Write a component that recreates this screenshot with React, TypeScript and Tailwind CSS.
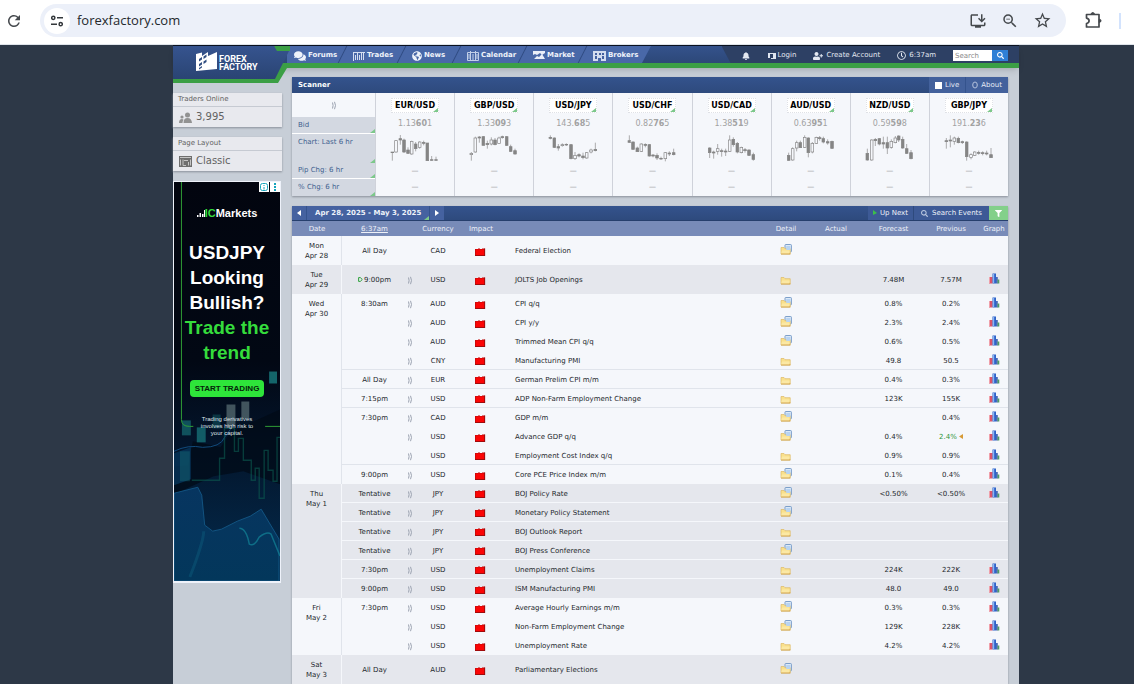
import { Fragment } from "react";
import type { ReactNode } from "react";
import { FaBell, FaComments, FaFilter, FaGlobeAmericas, FaRegClock, FaSearch, FaUserPlus } from "react-icons/fa";
import { MdInstallDesktop, MdOutlineExtension, MdRefresh, MdStarOutline, MdZoomOut } from "react-icons/md";

// x, high, low, open/close top, open/close bottom, filled
type Candle = [number, number, number, number, number, boolean];

type Pair = { name: string; price: [string, string, string]; candles: Candle[] };

const pairs: Pair[] = [
  {
    name: "EUR/USD",
    price: ["1.13", "60", "1"],
    candles: [
      [7, 54, 80, 54, 56, true], [18, 18, 56, 20, 54, false], [31, 3, 32, 14, 18, true], [42, 14, 57, 18, 54, true],
      [54, 40, 60, 48, 58, true], [65, 20, 62, 22, 60, false], [77, 24, 52, 30, 44, true], [89, 22, 44, 24, 40, false],
      [101, 20, 34, 25, 28, true], [112, 27, 80, 27, 80, true], [125, 66, 80, 77, 79, true], [138, 68, 80, 77, 79, true],
    ],
  },
  {
    name: "GBP/USD",
    price: ["1.33", "09", "3"],
    candles: [
      [7, 54, 80, 58, 62, false], [19, 8, 56, 12, 54, false], [31, 6, 26, 9, 12, true], [43, 6, 34, 8, 34, true],
      [55, 20, 44, 28, 32, true], [67, 10, 34, 18, 30, false], [78, 12, 34, 18, 32, true], [90, 8, 28, 12, 28, false],
      [100, 5, 14, 8, 11, true], [113, 6, 36, 8, 34, true], [125, 32, 54, 38, 52, true], [138, 44, 62, 50, 60, true],
    ],
  },
  {
    name: "USD/JPY",
    price: ["143.", "68", "5"],
    candles: [
      [7, 4, 16, 10, 13, true], [19, 10, 42, 12, 40, true], [31, 30, 50, 38, 42, true], [43, 28, 38, 32, 35, false],
      [55, 28, 36, 31, 33, true], [69, 30, 76, 32, 74, true], [81, 54, 78, 64, 74, false], [93, 58, 70, 62, 66, true],
      [105, 56, 76, 66, 71, true], [116, 54, 74, 56, 72, false], [129, 44, 58, 48, 54, false], [142, 26, 52, 46, 50, true],
    ],
  },
  {
    name: "USD/CHF",
    price: ["0.82", "76", "5"],
    candles: [
      [7, 4, 26, 20, 25, true], [18, 22, 46, 24, 46, true], [31, 38, 54, 42, 53, true], [43, 28, 54, 30, 52, false],
      [55, 28, 40, 31, 34, true], [67, 30, 68, 32, 66, true], [78, 60, 70, 63, 66, true], [90, 58, 78, 64, 72, true],
      [102, 68, 78, 73, 75, true], [115, 54, 82, 56, 74, false], [127, 52, 66, 57, 60, true], [140, 44, 64, 56, 62, true],
    ],
  },
  {
    name: "USD/CAD",
    price: ["1.38", "51", "9"],
    candles: [
      [8, 40, 72, 42, 56, true], [20, 50, 74, 54, 57, true], [32, 30, 62, 44, 52, false], [44, 44, 68, 50, 53, true],
      [56, 44, 66, 51, 54, true], [68, 4, 54, 18, 52, false], [79, 10, 38, 16, 32, true], [91, 24, 58, 28, 54, true],
      [103, 38, 58, 40, 56, false], [114, 42, 56, 47, 50, true], [126, 46, 66, 48, 64, true], [139, 56, 80, 62, 76, true],
    ],
  },
  {
    name: "AUD/USD",
    price: ["0.63", "95", "1"],
    candles: [
      [8, 56, 80, 64, 79, true], [20, 40, 80, 44, 78, false], [32, 20, 52, 26, 42, false], [43, 20, 42, 26, 41, true],
      [56, 4, 42, 10, 40, false], [67, 10, 70, 12, 56, true], [79, 24, 58, 28, 54, false], [91, 8, 30, 10, 28, false],
      [101, 6, 20, 11, 14, true], [112, 8, 28, 14, 24, true], [125, 16, 32, 23, 27, true], [138, 20, 44, 22, 43, true],
    ],
  },
  {
    name: "NZD/USD",
    price: ["0.59", "59", "8"],
    candles: [
      [7, 44, 80, 58, 78, true], [20, 16, 80, 18, 78, false], [31, 12, 36, 16, 20, true], [43, 12, 34, 14, 30, true],
      [55, 8, 44, 26, 30, true], [67, 8, 60, 26, 42, true], [79, 16, 44, 22, 40, false], [91, 6, 28, 12, 26, false],
      [101, 4, 24, 6, 18, true], [113, 8, 44, 16, 42, true], [125, 30, 60, 44, 58, true], [138, 48, 76, 56, 74, true],
    ],
  },
  {
    name: "GBP/JPY",
    price: ["191.", "23", "6"],
    candles: [
      [7, 12, 44, 20, 23, true], [19, 4, 40, 18, 21, true], [31, 8, 32, 12, 22, false], [43, 8, 28, 13, 26, true],
      [55, 20, 30, 23, 26, true], [68, 22, 80, 24, 68, true], [81, 58, 76, 62, 70, false], [92, 52, 66, 54, 64, false],
      [104, 50, 62, 55, 58, true], [116, 52, 64, 56, 59, true], [128, 50, 64, 57, 60, true], [141, 42, 72, 62, 71, true],
    ],
  },
];

type Row = {
  time?: string;
  next?: boolean;
  silent?: boolean;
  cur: string;
  event: string;
  doc?: boolean;
  forecast?: string;
  previous?: string;
  revised?: boolean;
  line?: boolean;
};

type Day = { day: string; date: string; rows: Row[] };

const days: Day[] = [
  {
    day: "Mon",
    date: "Apr 28",
    rows: [{ time: "All Day", silent: true, cur: "CAD", event: "Federal Election", doc: true }],
  },
  {
    day: "Tue",
    date: "Apr 29",
    rows: [{ time: "9:00pm", next: true, cur: "USD", event: "JOLTS Job Openings", forecast: "7.48M", previous: "7.57M" }],
  },
  {
    day: "Wed",
    date: "Apr 30",
    rows: [
      { time: "8:30am", cur: "AUD", event: "CPI q/q", doc: true, forecast: "0.8%", previous: "0.2%" },
      { cur: "AUD", event: "CPI y/y", doc: true, forecast: "2.3%", previous: "2.4%" },
      { cur: "AUD", event: "Trimmed Mean CPI q/q", doc: true, forecast: "0.6%", previous: "0.5%" },
      { cur: "CNY", event: "Manufacturing PMI", forecast: "49.8", previous: "50.5", line: true },
      { time: "All Day", cur: "EUR", event: "German Prelim CPI m/m", forecast: "0.4%", previous: "0.3%", line: true },
      { time: "7:15pm", cur: "USD", event: "ADP Non-Farm Employment Change", forecast: "123K", previous: "155K", line: true },
      { time: "7:30pm", cur: "CAD", event: "GDP m/m", doc: true, forecast: "", previous: "0.4%" },
      { cur: "USD", event: "Advance GDP q/q", doc: true, forecast: "0.4%", previous: "2.4%", revised: true },
      { cur: "USD", event: "Employment Cost Index q/q", forecast: "0.9%", previous: "0.9%", line: true },
      { time: "9:00pm", cur: "USD", event: "Core PCE Price Index m/m", doc: true, forecast: "0.1%", previous: "0.4%" },
    ],
  },
  {
    day: "Thu",
    date: "May 1",
    rows: [
      { time: "Tentative", cur: "JPY", event: "BOJ Policy Rate", doc: true, forecast: "<0.50%", previous: "<0.50%", line: true },
      { time: "Tentative", cur: "JPY", event: "Monetary Policy Statement", doc: true, line: true },
      { time: "Tentative", cur: "JPY", event: "BOJ Outlook Report", line: true },
      { time: "Tentative", cur: "JPY", event: "BOJ Press Conference", doc: true, line: true },
      { time: "7:30pm", cur: "USD", event: "Unemployment Claims", forecast: "224K", previous: "222K", line: true },
      { time: "9:00pm", cur: "USD", event: "ISM Manufacturing PMI", forecast: "48.0", previous: "49.0" },
    ],
  },
  {
    day: "Fri",
    date: "May 2",
    rows: [
      { time: "7:30pm", cur: "USD", event: "Average Hourly Earnings m/m", doc: true, forecast: "0.3%", previous: "0.3%" },
      { cur: "USD", event: "Non-Farm Employment Change", doc: true, forecast: "129K", previous: "228K" },
      { cur: "USD", event: "Unemployment Rate", forecast: "4.2%", previous: "4.2%" },
    ],
  },
  {
    day: "Sat",
    date: "May 3",
    rows: [{ time: "All Day", silent: true, cur: "AUD", event: "Parliamentary Elections", doc: true }],
  },
];

function TradesIcon() {
  return (
    <svg width="12" height="10" viewBox="0 0 12 10" fill="none" stroke="#d5def0">
      <path d="M0 1.5h12M.5 1v9M2.5 4v5M4.5 2v7M6.5 4v5M8.5 2v7M10.5 1v8" />
    </svg>
  );
}

function CalendarIcon() {
  return (
    <svg width="12" height="10" viewBox="0 0 12 10" fill="none" stroke="#c3d0e8">
      <path d="M.5 1.5h11v8H.5zM3.5 0v9M6 3v6M8.5 0v9M2 3v5M10 3v5" />
    </svg>
  );
}

function MarketIcon() {
  return (
    <svg width="12" height="9" viewBox="0 0 12 9">
      <path d="M0 0h12v2L9 4 7 2 4 4 2 3 0 4z" fill="#e9eef8" />
      <path d="M1 8l3-3 2 1 3-3 3 5H1z" fill="#e9eef8" />
    </svg>
  );
}

function BrokersIcon() {
  return (
    <svg width="13" height="10" viewBox="0 0 13 10">
      <path d="M0 0h13v10H8V7H5v3H0z" fill="#d3dcee" />
      <path d="M2 2h2v2H2zM2 5h2v3H2zM6 2h2v2H6zM9 2h2v2H9zM9 5h2v3H9z" fill="#4360a0" />
    </svg>
  );
}

const navItems: { label: string; icon: ReactNode; width: string }[] = [
  { label: "Forums", icon: <FaComments size={12} />, width: "w-[59px]" },
  { label: "Trades", icon: <TradesIcon />, width: "w-[59px]" },
  { label: "News", icon: <FaGlobeAmericas size={10} />, width: "w-[55px]" },
  { label: "Calendar", icon: <CalendarIcon />, width: "w-[66px]" },
  { label: "Market", icon: <MarketIcon />, width: "w-[60px]" },
  { label: "Brokers", icon: <BrokersIcon />, width: "w-[65px]" },
];

function SoundIcon() {
  return (
    <svg className="mx-auto" width="6" height="9" viewBox="0 0 6 9" fill="none" stroke="#9ba2b0">
      <path d="M1.500 1.500q1.200 3 0 6M3.500.8q2 3.700 0 7.400" />
    </svg>
  );
}

function ImpactIcon() {
  return (
    <svg className="mx-auto" width="12" height="8" viewBox="0 0 12 8">
      <path d="M0 1h3V.4h2V1h2V.4h3V8H0z" fill="#c40a0a" />
      <path d="M.8 1.500h8.400v5.500H.8z" fill="#fb0505" />
      <path d="M0 7.600h10M9.700.4V8" fill="none" stroke="#8d0d0d" strokeWidth=".7" />
    </svg>
  );
}

function FolderIcon({ doc }: { doc?: boolean }) {
  return (
    <svg className={doc ? "mx-auto mb-1" : "mx-auto mb-0.5"} width="12" height="11" viewBox="0 0 12 11">
      {doc && <rect x="5" y=".5" width="6.400" height="7.500" rx=".8" fill="#dbe9f8" stroke="#7196c4" strokeWidth=".9" />}
      <path d="M1 3.500h3l1 1.200h5.200V10H1z" fill="#f9e08c" stroke="#dcb967" strokeWidth=".7" />
      <path d="M2 6.500h7.800L9 10H1z" fill="#fbe8a4" />
      {doc && <path d="M6.200 2v4h4V2z" fill="#b7d3f2" />}
      <path d="M1 10h9.400" stroke="#cf9f45" strokeWidth=".9" />
    </svg>
  );
}

function GraphIcon() {
  return (
    <svg className="mx-auto mb-1" width="11" height="11" viewBox="0 0 11 11">
      <path d="M0 4h3.500v6.500H0z" fill="#d9546a" />
      <path d="M0 4h1v6.500H0z" fill="#f0a0aa" />
      <path d="M3.500.5H7v10H3.500z" fill="#2d62c9" />
      <path d="M4 1h1.200v9H4z" fill="#8db4f2" />
      <path d="M7 4h1.800v6.500H7z" fill="#4a6ab8" />
      <path d="M8.500 6.500h1.800v4H8.500z" fill="#4f9b66" />
    </svg>
  );
}

function CandleChart({ candles }: { candles: Candle[] }) {
  return (
    <svg className="mx-auto" width="50" height="28" viewBox="0 0 150 84">
      {candles.map(([x, high, low, top, bottom, filled]) => (
        <g key={x} stroke="#858585" strokeWidth="2">
          <path d={`M${x} ${high}V${low}`} />
          <rect x={x - 4} y={top} width="8" height={bottom - top} fill={filled ? "#858585" : "#f5f7fb"} />
        </g>
      ))}
    </svg>
  );
}

function Corner() {
  return (
    <svg className="absolute right-0 bottom-0" width="5" height="4" viewBox="0 0 5 4">
      <path d="M5 0v4H0z" fill="#7cc88a" />
    </svg>
  );
}

function BrowserBar() {
  return (
    <div className="flex h-[45px] items-start border-b border-[#dfe4ea] bg-white text-[#45494d]">
      <button aria-label="Reload" className="mt-3 ml-[5px] w-[18px]">
        <MdRefresh size={18} />
      </button>
      <div className="mt-1 ml-[17px] flex h-[33px] flex-1 items-center rounded-full bg-[#ecf0f9] pr-[14px] pl-1">
        <button aria-label="Site information" className="flex size-[26px] items-center justify-center rounded-full bg-white">
          <svg width="12" height="12" viewBox="0 0 12 12" fill="none" stroke="#33373b" strokeWidth="1.5">
            <circle cx="2.3" cy="2.8" r="1.6" />
            <circle cx="9.7" cy="9.2" r="1.6" />
            <path d="M6 2.8h6M0 9.2h6" />
          </svg>
        </button>
        <input
          aria-label="Address"
          defaultValue="forexfactory.com"
          className="ml-[7px] min-w-0 flex-1 bg-transparent font-['Open_Sans',sans-serif] text-[13px] text-[#24282c] outline-none"
        />
        <button aria-label="Install">
          <MdInstallDesktop size={18} />
        </button>
        <button aria-label="Zoom" className="ml-[14px]">
          <MdZoomOut size={18} />
        </button>
        <button aria-label="Bookmark" className="ml-[14px]">
          <MdStarOutline size={19} />
        </button>
      </div>
      <button aria-label="Extensions" className="mt-[11px] ml-[18px]">
        <svg width="19" height="19" viewBox="0 0 19 19" fill="none" stroke="currentColor" strokeWidth="1.700" strokeLinejoin="round">
          <path d="M2.500 3.500h12.500v12.500H2.500v-3.500q2.600-.5 2.600-2.700t-2.600-2.700z" />
          <path d="M7.500 3q1.300-2.400 2.600 0zM15.500 8.500q2.400 1.300 0 2.600z" fill="currentColor" />
        </svg>
      </button>
      <div className="mt-[13px] mr-[13px] ml-[16px] h-4 w-0.5 bg-[#d3e3fd]" />
    </div>
  );
}

function Logo() {
  return (
    <a href="#home" aria-label="Forex Factory" className="absolute top-0 left-0 block h-[40px] w-[122px]">
      <svg className="absolute inset-0" width="122" height="40" viewBox="0 0 122 40">
        <defs>
          <linearGradient id="logo" x1="0" y1="0" x2="0" y2="1">
            <stop offset="0" stopColor="#36548f" />
            <stop offset="1" stopColor="#2a4473" />
          </linearGradient>
        </defs>
        <path d="M0 33h101l8-16h13v5h-8l-9 15H0z" fill="#3b9f45" />
        <path d="M101 0h16v5h-14z" fill="#3b9f45" />
        <path d="M0 0h101l3 5h12l-14 28H0z" fill="url(#logo)" />
        <path d="M23 25V8l6-1.500v3.500l6-4v4l9-4v17z" fill="#fff" />
        <path d="M26 13l3-2v2.500l-3 2zM30.500 10.500l3-2V11l-3 2zM26 18l3-2v2.500l-3 2zM30.500 15.500l3-2V16l-3 2zM26 22l3-2v1.500l-3 2z" fill="#2f4c80" />
      </svg>
      <span className="absolute top-[9px] left-[46px] font-['Roboto',sans-serif] text-[9px] leading-[8px] font-bold text-white">
        FOREX
        <br />
        FACTORY
      </span>
    </a>
  );
}

function Header() {
  return (
    <header className="relative z-10 flex h-[22px] justify-between border-b-[5px] border-[#3b9f45] bg-linear-to-b from-[#34528c] to-[#2d4878] shadow-md">
      <nav className="ml-[114px] flex bg-[#4968a8] [clip-path:polygon(0_0,100%_0,calc(100%-9px)_100%,0_100%)]">
        {navItems.map((item) => (
          <a key={item.label} href="#nav" className={`relative flex items-center gap-0.5 pt-0.5 pl-[7px] text-[7px] font-bold text-[#eef2fa] ${item.width}`}>
            {item.icon}
            {item.label}
            <span className="absolute inset-y-0 right-[3px] w-px -skew-x-[27deg] bg-[#2f4a80]" />
          </a>
        ))}
      </nav>
      <div className="flex items-center bg-[#2d4064] pt-0.5 pr-[11px] pl-5 text-[7px] text-[#e3e8f1] [clip-path:polygon(0_0,100%_0,100%_100%,9px_100%)]">
        <FaBell size={8} />
        <a href="#login" className="ml-[18px] flex items-center gap-0.5">
          <svg width="8" height="8" viewBox="0 0 8 8">
            <path d="M0 1h8v6H3V6h2V2H2v4H0z" fill="#dfe5f0" />
          </svg>
          Login
        </a>
        <a href="#register" className="ml-[17px] flex items-center gap-[3px]">
          <FaUserPlus size={10} />
          Create Account
        </a>
        <a href="#time" className="ml-[17px] flex items-center gap-[3px]">
          <FaRegClock size={9} />
          6:37am
        </a>
        <input type="search" aria-label="Search" placeholder="Search" className="ml-[17px] h-[11px] w-[39px] bg-white px-0.5 text-[7px] text-gray-700 placeholder:text-[#888]" />
        <button aria-label="Go" className="flex h-[11px] w-4 items-center justify-center bg-[#2f80d6] text-white">
          <FaSearch size={7} />
        </button>
      </div>
      <Logo />
    </header>
  );
}

function Ad() {
  return (
    <a
      href="#ad"
      className="relative mt-[10px] mr-px block h-[402px] overflow-hidden border border-b-2 border-[#eef2fa] bg-[#02050f] text-center font-['Liberation_Sans',sans-serif] text-white"
    >
      <svg className="absolute inset-0 h-full w-full" viewBox="0 0 107 400" preserveAspectRatio="none">
        <defs>
          <linearGradient id="sea" x1="0" y1="0" x2="0" y2="1">
            <stop offset="0" stopColor="#02050f" />
            <stop offset=".45" stopColor="#020814" />
            <stop offset=".65" stopColor="#03142a" />
            <stop offset="1" stopColor="#042c4e" />
          </linearGradient>
          <linearGradient id="hill" x1="0" y1="0" x2="0" y2="1">
            <stop offset="0" stopColor="#073560" />
            <stop offset="1" stopColor="#03375b" />
          </linearGradient>
        </defs>
        <rect width="107" height="400" fill="url(#sea)" />
        <path d="M0 285l14-1 5-24 28 6 8-12 8-6 44-20v75L70 290l-30 5-40 18z" fill="#010a16" opacity=".7" />
        <path d="M0 272l17-6v32L0 304z" fill="#06345a" opacity=".8" />
        <path d="M0 312l24-6 4 8 3 30 8 6 9-2 16-8 13-5 11-7 18 30v42H0z" fill="url(#hill)" stroke="#155d8e" strokeWidth=".8" />
        <path d="M0 270q14-7 29-4 18 0 22-10l6-8" fill="none" stroke="#114b7c" />
        <path d="M66 347q7 0 10 16 5 3 10-7 8-6 12-3l9 22" fill="none" stroke="#138499" strokeWidth="1.5" opacity=".7" />
        <path d="M16 396q14-36 14-46" fill="none" stroke="#127b96" strokeWidth="3" opacity=".25" />
        <path
          d="M18 299h28v-22h5v-30h10v23h4v-13h5v22h8v20h4v-12h4v30h5v-48h4v20h5v11h4v-44h5v30"
          fill="none"
          stroke="#0b5b50"
          strokeWidth="1.4"
          opacity=".6"
        />
        <g fill="#197c80">
          <path d="M96 190h8v12h-8z" opacity=".8" />
          <path d="M8 239h9v15H8z" opacity=".6" />
          <path d="M23 246h9v15h-9z" opacity=".7" />
          <path d="M39 233h8v14h-8zM6 270h10v30H6z" opacity=".35" />
        </g>
        <path d="M53 223h9v22h-9zM68 220h8v17h-8z" fill="#80999a" opacity=".5" />
        <path d="M7.500 0v238q0 7 8 7h4M92 245h15" fill="none" stroke="#2f9e35" />
      </svg>
      <div className="absolute top-0 right-0 flex h-[10px] gap-px text-[#16a5bd]">
        <svg className="bg-white" width="10" height="10" viewBox="0 0 10 10" fill="none" stroke="currentColor">
          <rect x="1.500" y="1.500" width="7" height="7" rx="2" />
          <path d="M5 3v1M5 5v2.500" />
        </svg>
        <svg className="bg-white" width="10" height="10" viewBox="0 0 10 10" fill="currentColor">
          <path d="M4 1h2v2H4zM4 4h2v2H4zM4 7h2v2H4z" />
        </svg>
      </div>
      <div className="relative pt-[25px]">
        <p className="flex items-end justify-center text-[11px] leading-3 font-bold">
          <svg className="mb-0.5" width="8" height="8" viewBox="0 0 8 8">
            <path d="M0 6h1.500v2H0zM2.500 4h1.500v4H2.500zM5 5h1.500v3H5zM7 1h1v7H7z" fill="#fff" />
          </svg>
          <span className="text-[#35dc3c]">IC</span>Markets
        </p>
        <p className="mt-[21px] text-[19px] leading-[25px] font-bold">
          USDJPY
          <br />
          Looking
          <br />
          Bullish?
          <br />
          <span className="text-[#35dc3c]">
            Trade the
            <br />
            trend
          </span>
        </p>
        <span className="mx-auto mt-[15px] block w-[74px] rounded bg-[#2ee53a] text-[8px] leading-[17px] font-bold text-[#06240a]">START TRADING</span>
        <p className="mt-[19px] text-[6px] leading-[7px] text-[#dfe5ea]">
          Trading derivatives
          <br />
          involves high risk to
          <br />
          your capital.
        </p>
      </div>
    </a>
  );
}

function Sidebar() {
  return (
    <aside className="w-[109px] shrink-0 pt-[25px]">
      <section className="bg-[#e8e9ee] text-[#626262] shadow-[0_1px_2px_#8a909a]">
        <h2 className="border-b border-[#c6cad2] pl-[5px] text-[7px] leading-[13px]">Traders Online</h2>
        <p className="flex items-center gap-1 pl-1.5 text-[10px] leading-5">
          <svg width="13" height="11" viewBox="0 0 13 11" fill="#929292">
            <circle cx="8.500" cy="3" r="2.500" />
            <path d="M4.500 11q0-5 4-5t4.500 5z" />
            <circle cx="3" cy="5" r="1.600" />
            <path d="M0 11q0-4 3-4 1 0 1.500.8-1 1.200-1 3.200z" />
          </svg>
          3,995
        </p>
      </section>
      <section className="mt-[10px] bg-[#e8e9ee] text-[#626262] shadow-[0_1px_2px_#8a909a]">
        <h2 className="border-b border-[#c6cad2] pl-[5px] text-[7px] leading-[13px]">Page Layout</h2>
        <p className="flex items-center gap-1 pl-1.5 text-[10px] leading-5">
          <svg width="13" height="11" viewBox="0 0 13 11">
            <path d="M0 0h13v11H0z" fill="#6e6e6e" />
            <path d="M1 1.500h11M1.500 3.500v6M4 3.500v6h3M5 4.500h4M9.500 6v3.500M11.500 3.500v6" stroke="#c5c5c5" fill="none" />
          </svg>
          Classic
        </p>
      </section>
      <Ad />
    </aside>
  );
}

const scannerRows = [
  { label: "Chart: Last 6 hr", height: "h-[29px]", chart: true },
  { label: "Pip Chg: 6 hr", height: "h-4", chart: false },
  { label: "% Chg: 6 hr", height: "h-[17px]", chart: false },
];

function Scanner() {
  return (
    <section className="shadow-[0_1px_2px_#8a909a]">
      <div className="flex h-4 items-center justify-between bg-linear-to-b from-[#34538d] to-[#2e4a7d] text-white">
        <h2 className="pl-1.5 text-[7px] font-bold">Scanner</h2>
        <div className="flex h-full bg-[#43619c] text-[7px] text-[#e6ebf5]">
          <label className="flex items-center gap-[3px] border-r border-[#34538d] pr-1.5 pl-1.5">
            <input type="checkbox" className="size-[7px] appearance-none bg-white" />
            Live
          </label>
          <button className="flex items-center gap-[3px] pr-1.5 pl-1.5">
            <svg width="6" height="8" viewBox="0 0 6 8" fill="none" stroke="#b5c2dc">
              <ellipse cx="3" cy="4" rx="2.300" ry="3" />
            </svg>
            About
          </button>
        </div>
      </div>
      <table className="w-full table-fixed border-separate border-spacing-0 bg-[#f5f7fb] text-center text-[7px] leading-[9px]">
        <thead>
          <tr className="h-6">
            <td className="w-[83px]">
              <SoundIcon />
            </td>
            {pairs.map((pair) => (
              <th key={pair.name} scope="col" className="border-l border-[#cfd2da] px-0 py-0">
                <span className="relative mx-auto block w-12 border border-dotted border-[#dfe1e6] bg-white text-[8px] leading-[13px] font-bold text-black">
                  {pair.name}
                  <Corner />
                </span>
              </th>
            ))}
          </tr>
        </thead>
        <tbody>
          <tr className="h-[17px]">
            <th scope="row" className="relative border-b border-white bg-[#d3d8e1] pl-1.5 text-left font-normal text-[#3f618f]">
              Bid
              <Corner />
            </th>
            {pairs.map(({ name, price }) => (
              <td key={name} className="border-l border-[#cfd2da] p-0 pb-1 text-[8px] text-[#a2a2a2]">
                {price[0]}
                <b>{price[1]}</b>
                {price[2]}
              </td>
            ))}
          </tr>
          {scannerRows.map((row, i) => (
            <tr key={row.label} className={row.height}>
              <th
                scope="row"
                className={`relative bg-[#d3d8e1] pl-1.5 text-left font-normal text-[#3f618f] ${row.chart ? "pt-1 align-top" : ""} ${i === 1 ? "border-b border-white" : ""}`}
              >
                {row.label}
                <Corner />
              </th>
              {pairs.map((pair) => (
                <td key={pair.name} className={`border-l border-[#cfd2da] p-0 text-[#888] ${row.chart ? "align-top" : ""}`}>
                  {row.chart ? <CandleChart candles={pair.candles} /> : "—"}
                </td>
              ))}
            </tr>
          ))}
        </tbody>
      </table>
    </section>
  );
}

function CalendarHeader() {
  return (
    <div className="flex h-[15px] justify-between border-b border-[#263f6d] bg-linear-to-b from-[#34538d] to-[#2e4a7d] text-[7px] text-[#eef2fa]">
      <div className="flex bg-[#4562a0]">
        <button aria-label="Previous week" className="flex w-[15px] items-center justify-center border-r border-[#34538d]">
          <svg width="4" height="6" viewBox="0 0 4 6">
            <path d="M4 0v6L0 3z" fill="#fff" />
          </svg>
        </button>
        <button className="relative px-2 font-bold">
          Apr 28, 2025 - May 3, 2025
          <Corner />
        </button>
        <button aria-label="Next week" className="flex w-[15px] items-center justify-center border-l border-[#34538d]">
          <svg width="4" height="6" viewBox="0 0 4 6">
            <path d="M0 0v6l4-3z" fill="#fff" />
          </svg>
        </button>
      </div>
      <div className="flex bg-[#3d5a96]">
        <button className="flex items-center gap-[3px] border-r border-[#2e4a7d] px-[5px]">
          <svg width="4" height="6" viewBox="0 0 4 6">
            <path d="M0 0v5l4-2z" fill="#3cc04a" />
          </svg>
          Up Next
        </button>
        <button className="flex items-center gap-1 px-[7px]">
          <FaSearch size={7} className="text-[#b9c6df]" />
          Search Events
        </button>
        <button aria-label="Filter" className="flex w-[19px] items-center justify-center bg-[#83d08a] text-white">
          <FaFilter size={7} />
        </button>
      </div>
    </div>
  );
}

function Calendar() {
  return (
    <section className="mt-[10px] shadow-[0_1px_2px_#8a909a]">
      <CalendarHeader />
      <table className="w-full table-fixed border-separate border-spacing-0 text-center text-[7px] leading-[9px] text-[#24272c]">
        <colgroup>
          <col className="w-[50px]" />
          <col className="w-[65px]" />
          <col className="w-[6px]" />
          <col className="w-[50px]" />
          <col className="w-[36px]" />
          <col />
          <col className="w-[42px]" />
          <col className="w-[58px]" />
          <col className="w-[57px]" />
          <col className="w-[58px]" />
          <col className="w-[28px]" />
        </colgroup>
        <thead>
          <tr className="h-[15px] bg-[#788bb8] text-[#eef1f8] [&>th]:p-0 [&>th]:pt-0.5 [&>th]:font-normal">
            <th scope="col">Date</th>
            <th scope="col">
              <a href="#timezone" className="underline">
                6:37am
              </a>
            </th>
            <td />
            <th scope="col">Currency</th>
            <th scope="col">Impact</th>
            <td />
            <th scope="col">Detail</th>
            <th scope="col">Actual</th>
            <th scope="col">Forecast</th>
            <th scope="col">Previous</th>
            <th scope="col">Graph</th>
          </tr>
        </thead>
        <tbody>
          {days.map((day, d) => {
            const grey = d === 1 || d === 3 || d === 5;
            const single = day.rows.length === 1;
            return (
              <Fragment key={day.date}>
                {day.rows.map((row, i) => {
                  const border = row.line ? (grey ? "[&>.cell]:border-b [&>.cell]:border-[#f5f7fb]" : "[&>.cell]:border-b [&>.cell]:border-[#e0e4eb]") : "";
                  return (
                    <tr
                      key={row.event}
                      className={`${grey ? "bg-[#e5e7ed]" : "bg-[#f5f7fb]"} ${single ? "h-[29px]" : "h-[19px]"} ${border} [&>td]:p-0 [&>td]:pt-0.5`}
                    >
                      {i === 0 && (
                        <th
                          scope="rowgroup"
                          rowSpan={day.rows.length}
                          className={`border-r p-0 pt-[5px] align-top leading-[10px] font-normal ${grey ? "border-[#f5f7fb]" : "border-[#e0e4eb]"}`}
                        >
                          {day.day}
                          <br />
                          {day.date}
                        </th>
                      )}
                      <td className="cell">
                        {row.next && (
                          <svg className="mr-px inline-block align-baseline" width="5" height="5" viewBox="0 0 5 5">
                            <path d="M.6.6h1.700L4.300 2.500 2.300 4.400H.6z" fill="none" stroke="#2fa23c" />
                          </svg>
                        )}
                        {row.time}
                      </td>
                      <td className="cell">{!row.silent && <SoundIcon />}</td>
                      <td className="cell">{row.cur}</td>
                      <td className="cell">
                        <ImpactIcon />
                      </td>
                      <td className="cell text-left">
                        <a href="#event" className="pl-4">
                          {row.event}
                        </a>
                      </td>
                      <td className="cell">
                        <FolderIcon doc={row.doc} />
                      </td>
                      <td className="cell" />
                      <td className="cell">{row.forecast}</td>
                      <td className={row.revised ? "cell text-[#2f9638]" : "cell"}>
                        {row.previous}
                        {row.revised && (
                          <svg className="ml-0.5 inline-block align-baseline" width="4" height="5" viewBox="0 0 4 5">
                            <path d="M4 0v5L0 2.500z" fill="#d79a35" />
                          </svg>
                        )}
                      </td>
                      <td className="cell">{row.previous && <GraphIcon />}</td>
                    </tr>
                  );
                })}
              </Fragment>
            );
          })}
        </tbody>
      </table>
    </section>
  );
}

export default function App() {
  return (
    <div className="min-h-screen bg-[#2d3847] font-['DejaVu_Sans',sans-serif]">
      <BrowserBar />
      <div className="mr-[115px] ml-[173px] border-t border-[#0b1220] bg-[#c7ced7]">
        <Header />
        <div className="flex gap-[10px] pr-[11px]">
          <Sidebar />
          <main className="min-w-0 flex-1 pt-[9px]">
            <Scanner />
            <Calendar />
          </main>
        </div>
      </div>
    </div>
  );
}
